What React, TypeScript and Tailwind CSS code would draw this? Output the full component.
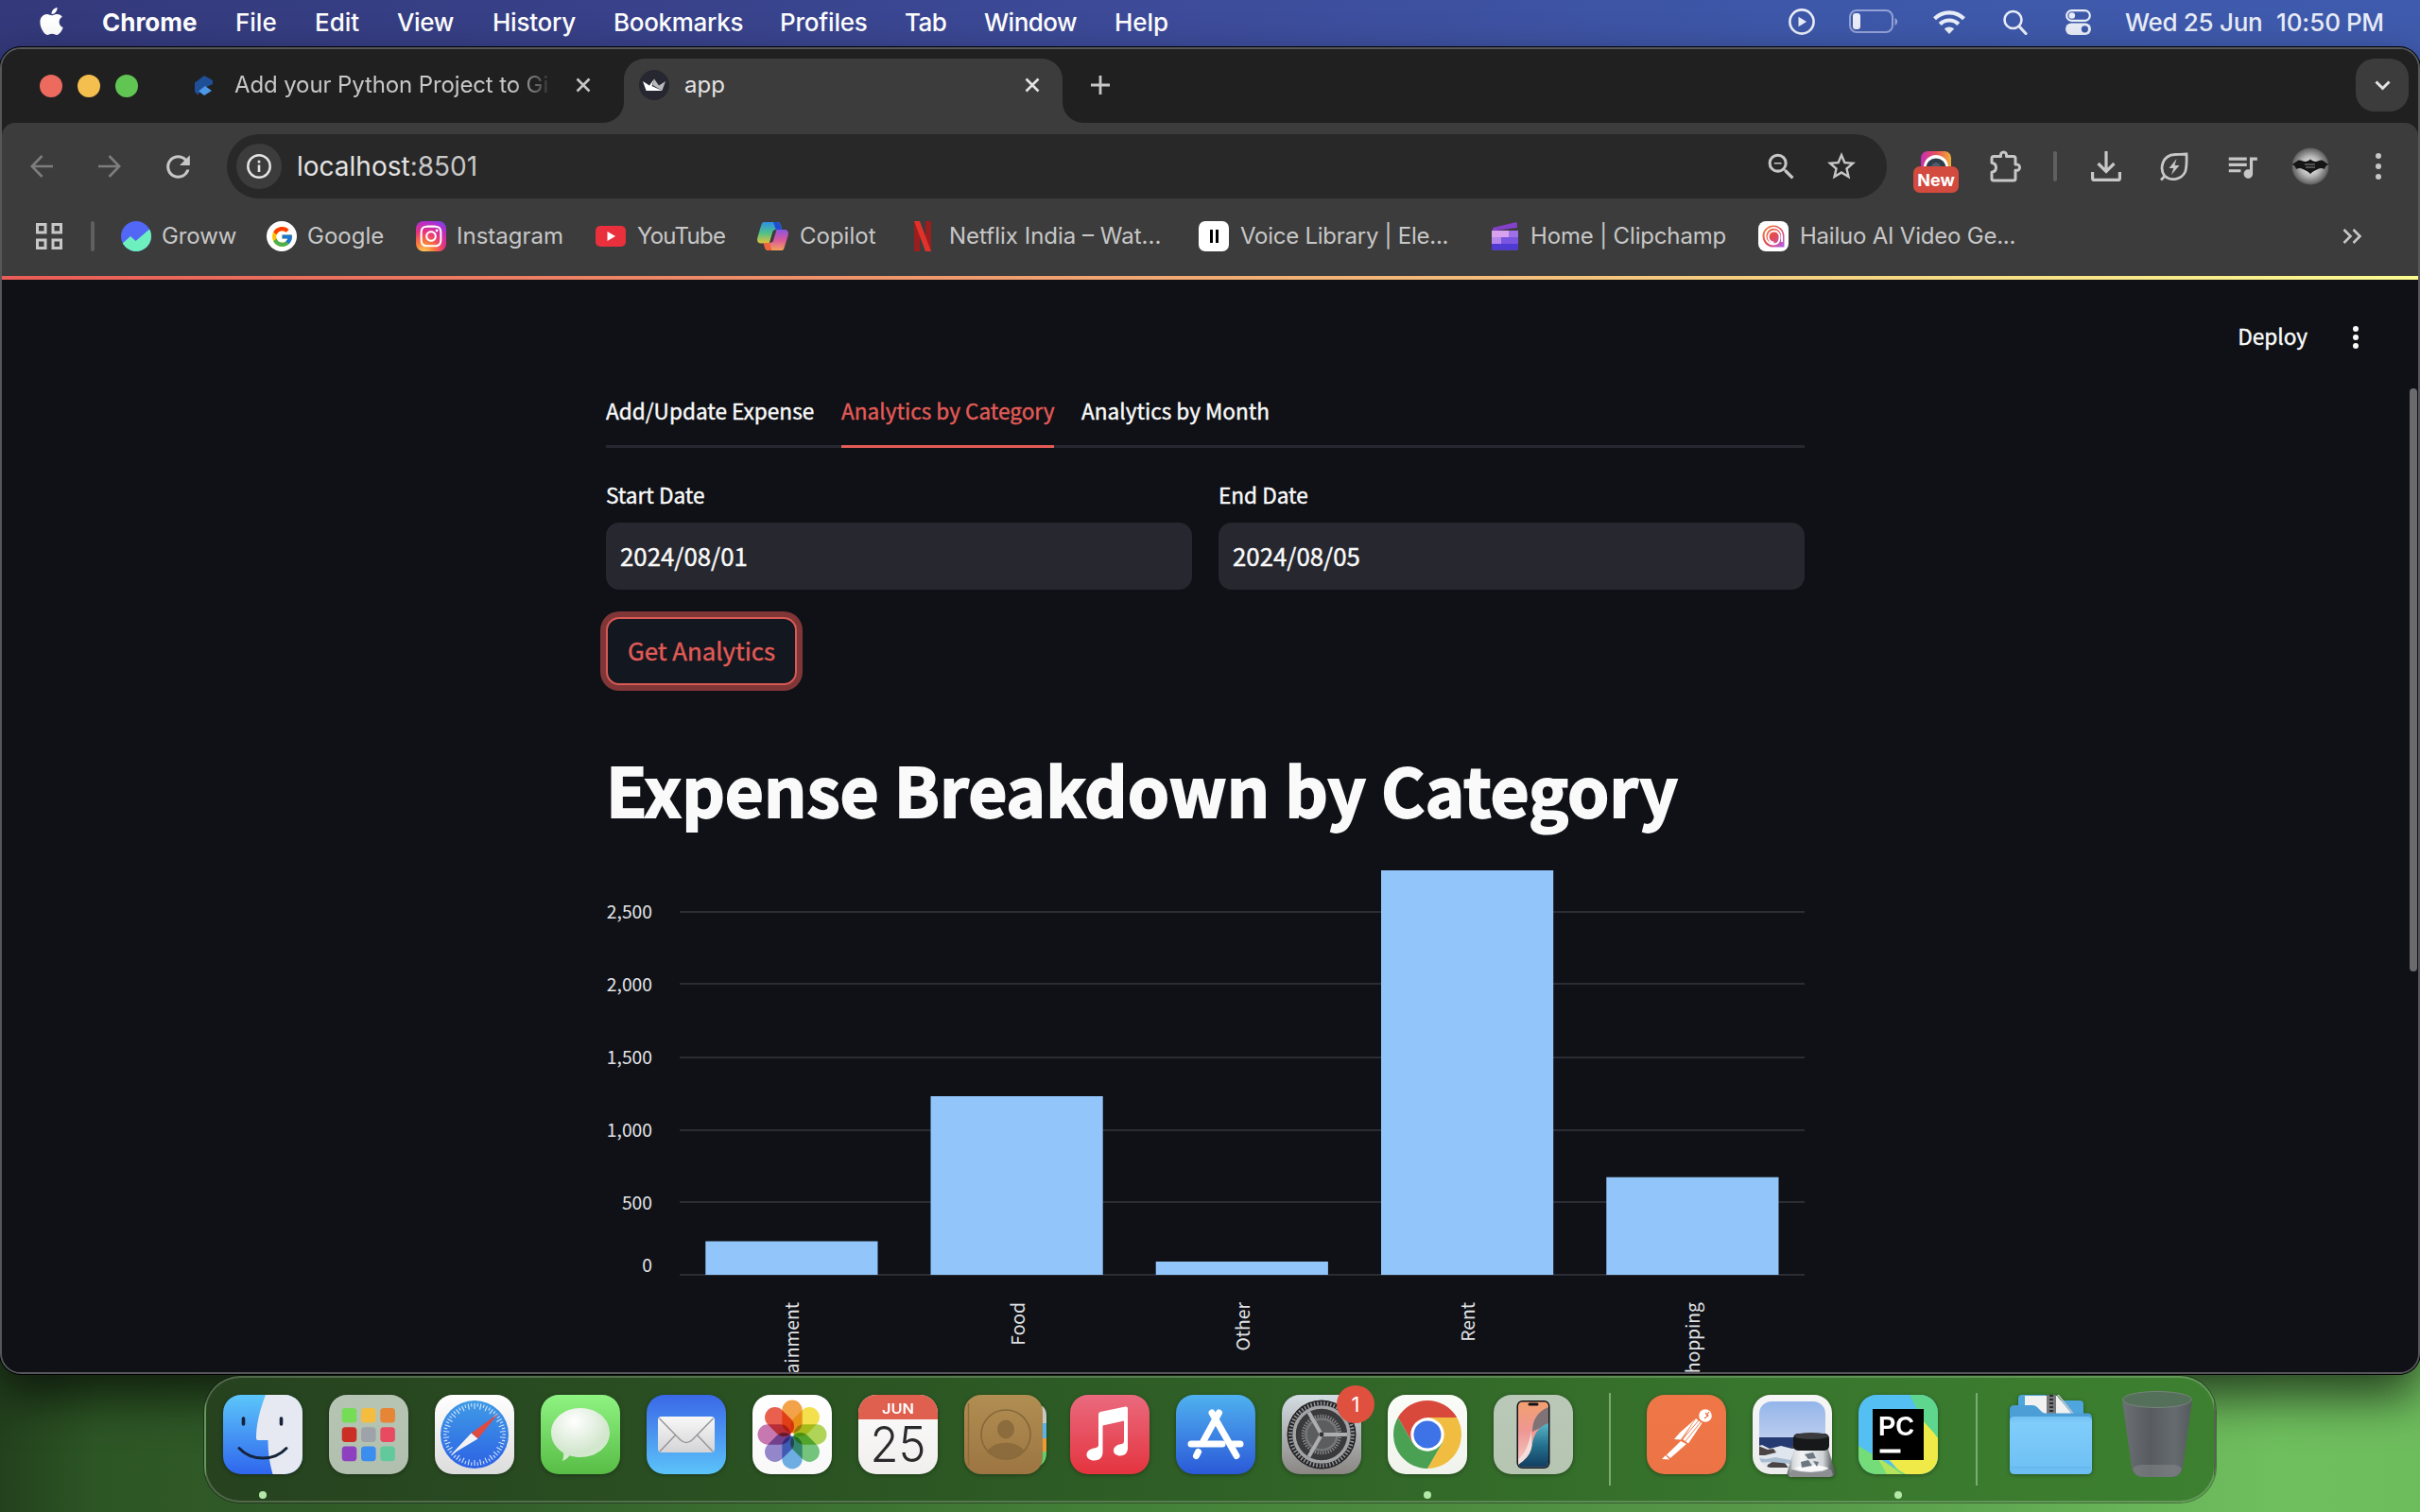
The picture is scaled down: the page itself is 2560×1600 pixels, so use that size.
import React, { type ReactNode } from "react";
import { FaApple, FaInstagram } from "react-icons/fa";
import { FcGoogle } from "react-icons/fc";
import { MdStarBorder, MdZoomOut, MdQueueMusic, MdRefresh } from "react-icons/md";

const sys = "font-['Inter',sans-serif]";
const src = "font-['Noto_Sans_CJK_SC',sans-serif]";

const menus = [
  { label: "File", cls: "w-[84px]" },
  { label: "Edit", cls: "w-[87px]" },
  { label: "View", cls: "w-[101px] tracking-[-0.4px]" },
  { label: "History", cls: "w-[128px] tracking-[-0.25px]" },
  { label: "Bookmarks", cls: "w-[176px] tracking-[-0.3px]" },
  { label: "Profiles", cls: "w-[132px] tracking-[-0.2px]" },
  { label: "Tab", cls: "w-[84px] tracking-[-0.6px]" },
  { label: "Window", cls: "w-[138px] tracking-[-0.5px]" },
  { label: "Help", cls: "w-[60px] tracking-[-0.1px]" },
];

function MenuBar() {
  return (
    <div className={`flex h-[46px] w-full shrink-0 items-center pl-[42px] pr-[38px] text-[26px] text-white ${sys}`}>
      <FaApple className="-mt-[2px] h-[33px] w-[25px]" />
      <div className="ml-[41px] w-[141px] font-bold">Chrome</div>
      {menus.map((m) => (
        <div key={m.label} className={`${m.cls} font-medium`}>{m.label}</div>
      ))}
      <div className="ml-auto flex items-center text-[#e9edf8]">
        <svg className="h-[28px] w-[28px]" viewBox="0 0 28 28"><circle cx="14" cy="14" r="12.6" fill="none" stroke="currentColor" strokeWidth="2.6" /><path d="M10.5 8.8v10.4l8.6-5.2z" fill="currentColor" /></svg>
        <svg className="ml-[36px] h-[26px] w-[52px]" viewBox="0 0 52 26"><rect x="1" y="1" width="45" height="23" rx="7" fill="none" stroke="#93a2d6" strokeWidth="2" /><rect x="4" y="4" width="8" height="17" rx="3" fill="currentColor" /><path d="M48.5 9v8c1.8-.8 2.7-2.200 2.700-4s-.9-3.200-2.700-4z" fill="#93a2d6" /></svg>
        <svg className="ml-[37px] h-[26px] w-[34px]" viewBox="0 0 34 26"><g fill="none" stroke="currentColor" strokeWidth="4.200"><path d="M1.500 9.800a22 22 0 0 1 31 0" /><path d="M7.200 15.500a14 14 0 0 1 19.600 0" /></g><path d="M17 26l-5.200-5.400a7.400 7.400 0 0 1 10.400 0z" fill="currentColor" /></svg>
        <svg className="ml-[40px] h-[27px] w-[26px]" viewBox="0 0 26 27"><circle cx="10.500" cy="11" r="9" fill="none" stroke="currentColor" strokeWidth="2.600" /><path d="M17 18l7 7.500" stroke="currentColor" strokeWidth="3.200" strokeLinecap="round" /></svg>
        <svg className="ml-[40px] h-[27px] w-[27px]" viewBox="0 0 27 27"><rect x="1.200" y="1.200" width="24.600" height="10.600" rx="5.300" fill="none" stroke="currentColor" strokeWidth="2.200" /><circle cx="6.800" cy="6.500" r="3.300" fill="currentColor" /><rect x="0" y="14.500" width="27" height="12.500" rx="6.200" fill="currentColor" /><circle cx="20.400" cy="20.800" r="3.600" fill="#3f58a9" /></svg>
        <span className="ml-[36px] w-[160px] font-medium tracking-[-0.3px]">Wed 25 Jun</span>
        <span className="w-[74px] font-medium tracking-[-0.1px]">10:50</span>
        <span className="w-[40px] font-medium tracking-[-0.4px]">PM</span>
      </div>
    </div>
  );
}

function X({ cls }: { cls: string }) {
  return <svg className={`h-[16px] w-[16px] ${cls}`} viewBox="0 0 16 16"><path d="M1.500 1.500l13 13M14.500 1.500l-13 13" stroke="currentColor" strokeWidth="2.600" /></svg>;
}

function TabStrip() {
  return (
    <div className={`flex h-[78px] shrink-0 bg-[#202020] pl-[40px] pt-[10px] text-[24px] ${sys}`}>
      <div className="flex h-[56px] items-center gap-[16px] pt-[2px]">
        <i className="h-[24px] w-[24px] rounded-full bg-[#ed6a5f]" />
        <i className="h-[24px] w-[24px] rounded-full bg-[#f5bf4f]" />
        <i className="h-[24px] w-[24px] rounded-full bg-[#61c554]" />
      </div>
      <div className="ml-[60px] flex h-[56px] w-[454px] items-center text-[#c7c7c7]">
        <svg className="h-[21px] w-[20px]" viewBox="0 0 20 21"><path d="M10 0l9 5v4L9 13.500 3 20.500 0 17V7.500z" fill="#1f4f96" /><path d="M11 11l7 5-8 5-6-4.500z" fill="#4d97e8" /></svg>
        <div className="ml-[22px] w-[335px] whitespace-nowrap tracking-[-0.12px] [mask-image:linear-gradient(90deg,#000_88%,transparent_101%)]">Add your Python Project to Gi</div>
        <X cls="ml-[26px] shrink-0" />
      </div>
      <div className="relative flex h-[68px] w-[464px] rounded-t-[22px] bg-[#3c3c3c] text-[#e3e3e3]">
        <svg className="absolute -left-[22px] bottom-0 h-[22px] w-[22px]" viewBox="0 0 22 22"><path d="M22 0v22H0A22 22 0 0 0 22 0z" fill="#3c3c3c" /></svg>
        <svg className="absolute -right-[22px] bottom-0 h-[22px] w-[22px]" viewBox="0 0 22 22"><path d="M0 0v22h22A22 22 0 0 1 0 0z" fill="#3c3c3c" /></svg>
        <div className="flex h-[56px] w-full items-center pl-[16px] pr-[24px]">
          <svg className="h-[32px] w-[32px]" viewBox="0 0 32 32"><circle cx="16" cy="16" r="16" fill="#262730" /><path d="M16 9.500l5 7 7-4.500-3.600 10-10-6z" fill="#b9b9bd" /><path d="M4 12l7 4.500L16 9.500l-2.500 7.500L24.400 22H7.600z" fill="#fff" /></svg>
          <span className="ml-[16px]">app</span>
          <X cls="ml-auto" />
        </div>
      </div>
      <div className="ml-[30px] flex h-[56px] items-center text-[#c7c7c7]">
        <svg className="h-[20px] w-[20px]" viewBox="0 0 20 20"><path d="M10 0v20M0 10h20" stroke="currentColor" strokeWidth="2.800" /></svg>
      </div>
      <div className="ml-auto mr-[10px] flex h-[56px] w-[56px] items-center justify-center rounded-[20px] bg-[#3c3c3c]">
        <svg className="h-[11px] w-[17px]" viewBox="0 0 17 11"><path d="M1.500 1.500l7 7 7-7" fill="none" stroke="#e3e3e3" strokeWidth="3" /></svg>
      </div>
    </div>
  );
}

function Cell({ children }: { children: ReactNode }) {
  return <div className="flex h-full w-[72px] items-center justify-center">{children}</div>;
}

function Toolbar() {
  return (
    <div className={`flex h-[92px] items-center pl-[6px] text-[#c7c7c7] ${sys}`}>
      <Cell><svg className="h-[24px] w-[24px] text-[#7d7d7d]" viewBox="0 0 24 24"><path d="M12.500 1L1.800 12l10.700 11M1.800 12H24" fill="none" stroke="currentColor" strokeWidth="2.600" /></svg></Cell>
      <Cell><svg className="h-[24px] w-[24px] text-[#7d7d7d]" viewBox="0 0 24 24"><path d="M11.500 1l10.700 11-10.700 11M22.200 12H0" fill="none" stroke="currentColor" strokeWidth="2.600" /></svg></Cell>
      <Cell><MdRefresh className="h-[37px] w-[37px]" /></Cell>
      <div className="ml-[16px] flex h-[68px] w-[1756px] items-center rounded-full bg-[#282828] pl-[10px] pr-[30px]">
        <div className="flex h-[48px] w-[48px] items-center justify-center rounded-full bg-[#3c3c3c]">
          <svg className="h-[26px] w-[26px]" viewBox="0 0 26 26"><circle cx="13" cy="13" r="11.700" fill="none" stroke="#e3e3e3" strokeWidth="2.500" /><path d="M13 11.500v7.500M13 6.800v2.600" stroke="#e3e3e3" strokeWidth="2.600" /></svg>
        </div>
        <span className="ml-[16px] text-[28px] text-[#e3e3e3]">localhost<span className="text-[#c7c7c7]">:8501</span></span>
        <MdZoomOut className="ml-auto h-[37px] w-[37px]" />
        <MdStarBorder className="ml-[27px] h-[36px] w-[36px]" />
      </div>
      <div className="ml-[16px] flex h-full w-[72px] flex-col items-center pt-[30px]">
        <svg className="h-[16px] w-[32px]" viewBox="0 0 32 16"><defs><linearGradient id="ex"><stop offset="0" stopColor="#c52fb5" /><stop offset=".5" stopColor="#e8505a" /><stop offset="1" stopColor="#f0b03a" /></linearGradient></defs><path d="M0 16V7a7 7 0 0 1 7-7h18a7 7 0 0 1 7 7v9z" fill="url(#ex)" /><circle cx="16" cy="17" r="13" fill="#fff" /><circle cx="16" cy="18" r="10.500" fill="#2e3b48" /><circle cx="16" cy="17" r="5" fill="#4c5c6b" /></svg>
        <div className="flex h-[28px] w-[48px] items-center justify-center rounded-[7px] bg-[#d34a3f] text-[18px] font-bold text-white">New</div>
      </div>
      <Cell><svg className="ml-[2px] h-[34px] w-[34px]" viewBox="0 0 34 34"><path d="M3 8.500c0-1.200.8-2 2-2h7.500C12 3.500 13.500 2 15.500 2s3.500 1.500 3 4.500H26c1.200 0 2 .8 2 2V15c3-.5 4.500 1 4.500 3.200S31 21.700 28 21.200V30c0 1.200-.8 2-2 2H5c-1.200 0-2-.8-2-2v-6.800c6-1 6-9 0-10z" fill="none" stroke="currentColor" strokeWidth="3" strokeLinejoin="round" /></svg></Cell>
      <div className="flex w-[36px] justify-center"><i className="h-[32px] w-[4px] rounded-full bg-[#5f5f5f]" /></div>
      <Cell><svg className="h-[32px] w-[32px]" viewBox="0 0 32 32"><path d="M16 0v21M7.500 13l8.500 8.500 8.500-8.500M1.600 22v6.400c0 1.200.8 2 2 2h24.800c1.200 0 2-.8 2-2V22" fill="none" stroke="currentColor" strokeWidth="3.200" /></svg></Cell>
      <Cell><svg className="h-[31px] w-[30px]" viewBox="0 0 30 31"><path d="M1 29.500l4-4.200C-.5 18.500 1.500 3 16 2.500c5-.2 8.500 0 12-.5.3 9 .5 14-1.500 19C23 28.500 12 31.500 5 25.300" fill="none" stroke="currentColor" strokeWidth="2.800" /><path d="M17.500 7l-8 10h4.800L12 24l8.500-10h-5z" fill="currentColor" /></svg></Cell>
      <Cell><MdQueueMusic className="h-[38px] w-[38px]" /></Cell>
      <Cell>
        <svg className="h-[40px] w-[40px]" viewBox="0 0 40 40"><defs><radialGradient id="av"><stop offset="0" stopColor="#fff" /><stop offset=".55" stopColor="#b5b5b5" /><stop offset="1" stopColor="#5c5c5c" /></radialGradient></defs><circle cx="20" cy="20" r="19.500" fill="url(#av)" /><path d="M0 18c4-1 5-4 8-4.500 3 0 4 1.500 7 1.500l3-1 2-1.500 2 1.500 3 1c3 0 4-1.500 7-1.500 3 .5 4 3.500 8 4.500-3 .5-4 2-5 5-2-1.500-5-1.500-7 0-2 1.200-5 2-8 5-3-3-6-3.800-8-5-2-1.500-5-1.500-7 0-1-3-2-4.500-5-5z" fill="#151515" /><path d="M14 18h11M15 21h10" stroke="#8a8a8a" strokeWidth="1.200" /></svg>
      </Cell>
      <Cell><svg className="h-[28px] w-[6px]" viewBox="0 0 6 28" fill="currentColor"><circle cx="3" cy="3" r="3" /><circle cx="3" cy="14" r="3" /><circle cx="3" cy="25" r="3" /></svg></Cell>
    </div>
  );
}

const bookmarks: { label: string; cls: string; icon: ReactNode }[] = [
  { label: "Groww", cls: "w-[154px] gap-[11px] tracking-[-0.1px]", icon: <svg className="h-[32px] w-[32px]" viewBox="0 0 32 32"><clipPath id="gw"><circle cx="16" cy="16" r="16" /></clipPath><g clipPath="url(#gw)"><path fill="#5267f5" d="M0 0h32v32H0z" /><path d="M0 25l10-9 5.500 5L32 7v25H0z" fill="#6ef0be" /></g></svg> },
  { label: "Google", cls: "w-[158px] gap-[11px]", icon: <span className="flex h-[32px] w-[32px] items-center justify-center rounded-full bg-white"><FcGoogle className="h-[25px] w-[25px]" /></span> },
  { label: "Instagram", cls: "w-[190px] gap-[11px]", icon: <span className="flex h-[32px] w-[32px] items-center justify-center rounded-[8px] bg-[radial-gradient(circle_at_25%_105%,#fdd45a_0%,#f9793a_28%,#e8317f_55%,#b02fd0_80%,#5b51ef_100%)] text-white"><FaInstagram className="h-[26px] w-[26px]" /></span> },
  { label: "YouTube", cls: "w-[171px] gap-[12px] tracking-[-0.75px]", icon: <svg className="h-[22px] w-[32px]" viewBox="0 0 32 22"><rect width="32" height="22" rx="5" fill="#e9303c" /><path d="M12.500 6v10l8.500-5z" fill="#fff" /></svg> },
  { label: "Copilot", cls: "w-[164px] gap-[12px]", icon: <svg className="h-[30px] w-[33px]" viewBox="0 0 33 30"><defs><linearGradient id="c1" x1="0" y1="0" x2="0" y2="1"><stop offset="0" stopColor="#2f8fe8" /><stop offset=".5" stopColor="#4cc08a" /><stop offset="1" stopColor="#e3c23a" /></linearGradient><linearGradient id="c2" x1="0" y1="0" x2="0" y2="1"><stop offset="0" stopColor="#8a55e0" /><stop offset=".5" stopColor="#d9589c" /><stop offset="1" stopColor="#f5a25a" /></linearGradient></defs><path d="M7 0h14c2.500 0 3.500 1.500 4.200 4l1 4h-6.500c-2 0-3 1-3.600 3l-2.600 9.500c-.8 2.500-1.500 2-4 2H4C0 22.500-.6 19 .6 15.500L4 4C5 1 5.500 0 7 0z" fill="url(#c1)" /><path d="M20 0c2.800 0 4.200 1 5 4l1.200 4h-6.500L17 0z" fill="#1f4fd0" /><path d="M26 30H12c-2.500 0-3.500-1.500-4.200-4l-1-4h6.500c2 0 3-1 3.600-3l2.600-9c.8-2.500 1.500-2 4-2H29c4 0 4.600 3.500 3.400 7L29 26c-1 3-1.500 4-3 4z" fill="url(#c2)" /><path d="M12 30c-2.500 0-3.500-1.500-4.200-4l-1-4h6.500l2.200 8z" fill="#f0653a" /><path d="M17 10l3-.2L16.400 21l-3-.2z" fill="#3c3c3c" /></svg> },
  { label: "Netflix India – Wat...", cls: "w-[303px] gap-[19px]", icon: <svg className="ml-[2px] h-[32px] w-[18px]" viewBox="0 0 18 32"><path d="M0 0h6v32H0zM12 0h6v32h-6z" fill="#9c1d1d" /><path d="M0 0h6l12 32h-6z" fill="#e0322b" /></svg> },
  { label: "Voice Library | Ele...", cls: "w-[308px] gap-[12px] tracking-[-0.26px]", icon: <span className="flex h-[32px] w-[32px] items-center justify-center gap-[3px] rounded-[7px] bg-white"><i className="h-[14px] w-[3px] bg-black" /><i className="h-[14px] w-[3px] bg-black" /></span> },
  { label: "Home | Clipchamp", cls: "w-[284px] gap-[12px] tracking-[-0.16px]", icon: <svg className="ml-[2px] h-[30px] w-[29px]" viewBox="0 0 29 30"><path d="M1 6L25 .300q1.500-.3 1.800 1L27 6 1 9.500z" fill="#8340c9" /><path d="M0 9h28v19a1.500 1.500 0 0 1-1.500 1.500h-25A1.500 1.500 0 0 1 0 28z" fill="#7a55e0" /><path d="M0 9h18v7H0z" fill="#d9a2ee" /><path d="M18 9h10v7H18z" fill="#9f70e8" /><path d="M0 16h10v7H0z" fill="#b887ec" /><path d="M0 23h28v5.500a1 1 0 0 1-1 1H1a1 1 0 0 1-1-1z" fill="#4f3bd4" /></svg> },
  { label: "Hailuo AI Video Ge...", cls: "w-[560px] gap-[12px] tracking-[-0.22px]", icon: <svg className="h-[32px] w-[32px]" viewBox="0 0 32 32"><defs><linearGradient id="hl" x1="0" y1="0" x2="1" y2="1"><stop offset="0" stopColor="#f0883a" /><stop offset=".5" stopColor="#e4484e" /><stop offset="1" stopColor="#b060f0" /></linearGradient></defs><rect width="32" height="32" rx="8" fill="#fff" /><path d="M16 4.500A11.500 11.500 0 1 0 16 27.500h11.500V16A11.500 11.500 0 0 0 16 4.500z" fill="url(#hl)" /><path d="M25 22V16a8.800 8.800 0 1 0-9 8.500c5 0 6.500-3.500 6.500-7a6 6 0 1 0-6 5" fill="none" stroke="#fff" strokeWidth="1.900" /></svg> },
];

function Bookmarks() {
  return (
    <div className={`flex h-[56px] items-center pl-[36px] text-[24px] text-[#c7c7c7] ${sys}`}>
      <svg className="h-[28px] w-[28px]" viewBox="0 0 28 28"><path d="M1.500 1.500h8.500v8.500H1.500zM18 1.500h8.500v8.500H18zM1.500 18h8.500v8.500H1.500zM18 18h8.500v8.500H18z" fill="none" stroke="currentColor" strokeWidth="3" /></svg>
      <i className="ml-[30px] mr-[28px] h-[32px] w-[4px] rounded-full bg-[#5f5f5f]" />
      {bookmarks.map((b) => (
        <div key={b.label} className={`flex shrink-0 items-center whitespace-nowrap ${b.cls}`}>{b.icon}<span>{b.label}</span></div>
      ))}
      <svg className="ml-[58px] h-[16px] w-[21px] shrink-0" viewBox="0 0 21 16"><path d="M1.500 1l7 7-7 7M11.500 1l7 7-7 7" fill="none" stroke="currentColor" strokeWidth="2.600" /></svg>
    </div>
  );
}

const ticks = [
  { y: 965, t: "2,500", ty: 965 }, { y: 1041, t: "2,000", ty: 1042 }, { y: 1119, t: "1,500", ty: 1119 },
  { y: 1196, t: "1,000", ty: 1196 }, { y: 1272, t: "500", ty: 1272.500 }, { y: 1349, t: "0", ty: 1339 },
];
const bars = [
  { x: 746.300, top: 1313.500, t: "Entertainment" }, { x: 984.500, top: 1160, t: "Food" }, { x: 1222.700, top: 1335, t: "Other" },
  { x: 1461, top: 921, t: "Rent" }, { x: 1699.300, top: 1245.700, t: "Shopping" },
];

function Chart() {
  return (
    <svg className="block h-[573px] w-[1268px] overflow-visible" viewBox="641 879 1268 573">
      {ticks.map((k) => (<rect key={k.t} x="719" y={k.y - 1} width="1190" height="2" fill="#2b2c34" />))}
      {bars.map((b) => (<rect key={b.t} x={b.x} y={b.top} width="182.200" height={1349 - b.top} fill="#92c5f9" />))}
      <g className={`${src} text-[19.3px] [-webkit-text-stroke:0.4px_#e2e3e6]`} fill="#e2e3e6">
        {ticks.map((k) => (<text key={k.t} x="690" y={k.ty + 7} textAnchor="end">{k.t}</text>))}
        {bars.map((b) => (<text key={b.t} transform={`translate(${b.x + 99} 1378) rotate(-90)`} textAnchor="end">{b.t}</text>))}
      </g>
    </svg>
  );
}

function Page() {
  return (
    <div className={`relative flex-1 overflow-hidden bg-[#0f1116] text-[#fafafa] [-webkit-text-stroke:0.4px_currentColor] ${src}`}>
      <div className="flex h-[118px] items-center justify-end pr-[63px] text-[22.6px] leading-[30px]">
        <span className="mt-[2px]">Deploy</span>
        <svg className="ml-[48px] mt-[4px] h-[24px] w-[6px]" viewBox="0 0 6 24" fill="currentColor"><circle cx="3" cy="3" r="3" /><circle cx="3" cy="12" r="3" /><circle cx="3" cy="21" r="3" /></svg>
      </div>
      <div className="ml-[639px] w-[1268px]">
        <div className="flex h-[60px] gap-[29px] whitespace-nowrap border-b-[3px] border-[#26272f] text-[22.6px] leading-[41px]">
          <div className="w-[220px]">Add/Update Expense</div>
          <div className="h-[60px] w-[225px] border-b-[3px] border-[#e25b56] text-[#e25b56]">Analytics by Category</div>
          <div className="w-[200px]">Analytics by Month</div>
        </div>
        <div className="mt-[36px] grid grid-cols-2 gap-[28px]">
          <div>
            <div className="mb-[15px] text-[22.6px] leading-[28px]">Start Date</div>
            <div className="h-[71px] rounded-[14px] bg-[#26272f] pl-[15px] text-[25.8px] leading-[70px]">2024/08/01</div>
          </div>
          <div>
            <div className="mb-[15px] text-[22.6px] leading-[28px]">End Date</div>
            <div className="h-[71px] rounded-[14px] bg-[#26272f] pl-[15px] text-[25.8px] leading-[70px]">2024/08/05</div>
          </div>
        </div>
        <button className="mt-[29px] block h-[72px] w-[202px] rounded-[14px] border-2 border-[#d95a55] bg-[#131720] text-[25.8px] leading-[62px] text-[#e25b56] shadow-[0_0_0_6px_#803637]"><span className="relative -top-px">Get Analytics</span></button>
        <h1 className="mt-[64px] h-[90px] whitespace-nowrap text-[70.9px] font-bold leading-[90px] [-webkit-text-stroke:1.8px_currentColor]">Expense Breakdown by Category</h1>
        <Chart />
      </div>
      <div className="absolute right-[1px] top-[115px] h-[617px] w-[8px] rounded-full bg-[#6b6b6e]" />
    </div>
  );
}

function Tile({ children, id, a, b }: { children?: ReactNode; id: string; a: string; b: string }) {
  return (
    <svg className="h-[84px] w-[84px] overflow-visible drop-shadow-[0_1px_2px_rgba(0,0,0,.35)]" viewBox="0 0 84 84">
      <defs>
        <linearGradient id={id} x1="0" y1="0" x2="0" y2="1"><stop offset="0" stopColor={a} /><stop offset="1" stopColor={b} /></linearGradient>
        <clipPath id={id + "c"}><rect width="84" height="84" rx="19" /></clipPath>
      </defs>
      <rect width="84" height="84" rx="19" fill={`url(#${id})`} />
      {children}
    </svg>
  );
}

const range = (n: number) => Array.from({ length: n }, (_, i) => i);

const Finder = () => (
  <Tile id="fi" a="#5cc6fa" b="#2f66ee">
    <g clipPath="url(#fic)"><path d="M45 0C38 18 35 33 35 46q0 2 2 2h10.500c0 14 2 25 5 36H84V0z" fill="#e6e9f1" /></g>
    <path d="M21.500 25v6M61.500 25v6" stroke="#14233a" strokeWidth="3.600" strokeLinecap="round" />
    <path d="M17 56.500c13 14 37 14 50 0" fill="none" stroke="#14233a" strokeWidth="3" strokeLinecap="round" />
  </Tile>
);
const padC = ["#74dc55", "#f4bd40", "#e58535", "#cb2e24", "#9da3a8", "#e84a62", "#8d41c0", "#3c8df0", "#62c99c"];
const Launchpad = () => (
  <Tile id="lp" a="#b6c4b4" b="#b1c0ae">
    {padC.map((c, i) => (<rect key={c} x={13.700 + (i % 3) * 20.300} y={14 + Math.floor(i / 3) * 20.300} width="15.600" height="15.600" rx="3.600" fill={c} />))}
  </Tile>
);
const Safari = () => (
  <Tile id="sa" a="#ffffff" b="#dcdcdc">
    <defs><linearGradient id="sab" x1="0" y1="0" x2="0" y2="1"><stop offset="0" stopColor="#3f9be6" /><stop offset="1" stopColor="#2d62e4" /></linearGradient></defs>
    <circle cx="42" cy="42" r="36" fill="url(#sab)" />
    {range(60).map((i) => (<path key={i} d={i % 2 ? "M42 9v3.500" : "M42 9v6"} stroke="#d4e6fb" strokeWidth="1.100" transform={`rotate(${i * 6} 42 42)`} />))}
    <path d="M67 20L45.500 46.500 38.500 40.500z" fill="#e04a3f" /><path d="M17 63.500l21.500-23 7 6z" fill="#f3f3f3" />
  </Tile>
);
const Messages = () => (
  <Tile id="ms" a="#8ff382" b="#57bd45">
    <defs><radialGradient id="msb" cx=".4" cy=".25" r=".85"><stop offset="0" stopColor="#fff" /><stop offset=".7" stopColor="#d2e6cd" /><stop offset="1" stopColor="#d4f0ce" /></radialGradient></defs>
    <path d="M42 14c17.500 0 31 11.500 31 26S59.500 66 42 66c-4 0-8-.6-11.500-1.800-2 2.800-4.500 4.800-8 5.800 1.500-2.500 2-5 1.500-8.500C16 56.500 11 49 11 40c0-14.500 13.500-26 31-26z" fill="url(#msb)" />
  </Tile>
);
const Mail = () => (
  <Tile id="ml" a="#3a68e8" b="#5cc3f9">
    <defs><linearGradient id="mlb" x1="0" y1="0" x2="0" y2="1"><stop offset="0" stopColor="#f8f8f8" /><stop offset="1" stopColor="#d4d4d6" /></linearGradient></defs>
    <rect x="12" y="23" width="60" height="38" rx="4" fill="url(#mlb)" />
    <path d="M14 60l17-18M70 60L53 42M13.500 25l22 22.500c4 4 9 4 13 0l22-22.500" fill="none" stroke="#97979b" strokeWidth="1.500" />
  </Tile>
);
const petals = ["#f29a3a", "#f2de3c", "#a8d148", "#69bf72", "#62a6e0", "#8a7cc6", "#c26cab", "#e9523f"];
const Photos = () => (
  <Tile id="ph" a="#ffffff" b="#f8f8f8">
    <g className="isolate">{petals.map((c, i) => (<rect key={c} x="31.300" y="5.500" width="21.400" height="35" rx="10.700" fill={c} opacity=".92" transform={`rotate(${i * 45} 42 42)`} className="mix-blend-multiply" />))}</g>
    <circle cx="42" cy="42" r="1.600" fill="#fff" />
  </Tile>
);
const Calendar = () => (
  <Tile id="ca" a="#fcfcfc" b="#f1efee">
    <path d="M0 26V19A19 19 0 0 1 19 0h46a19 19 0 0 1 19 19v7z" fill="#e0604f" />
    <text x="42" y="20" textAnchor="middle" fill="#fff" className="font-['Inter'] text-[15px] font-semibold" textLength="34" lengthAdjust="spacingAndGlyphs">JUN</text>
    <text x="42" y="71" textAnchor="middle" fill="#2a2a2c" className="font-['Inter'] text-[52px] font-light" textLength="59" lengthAdjust="spacingAndGlyphs">25</text>
  </Tile>
);
const Contacts = () => (
  <svg className="h-[84px] w-[88px] translate-x-[2px] overflow-visible drop-shadow-[0_1px_2px_rgba(0,0,0,.35)]" viewBox="0 0 88 84">
    <defs><linearGradient id="co" x1="0" y1="0" x2="0" y2="1"><stop offset="0" stopColor="#b18e52" /><stop offset="1" stopColor="#9c7542" /></linearGradient></defs>
    <path d="M76 10q11 1 11 12v8H76z" fill="#c9c9c4" /><path d="M76 30h11v16H76z" fill="#58b4e6" /><path d="M76 46h11v14H76z" fill="#ee9a33" /><path d="M76 60h11v3q-1 10-8 12z" fill="#62d06a" />
    <rect width="83" height="84" rx="18" fill="url(#co)" /><path d="M4.500 9v66" stroke="#8d6c3a" strokeWidth="1.500" />
    <circle cx="44" cy="42" r="26" fill="none" stroke="#86683a" strokeWidth="1.600" /><ellipse cx="44" cy="36.500" rx="9" ry="10" fill="#8c6c3c" /><path d="M25 59c7-11 31-11 38 0a26 26 0 0 1-38 0z" fill="#8c6c3c" />
  </svg>
);
const Music = () => (
  <Tile id="mu" a="#ea6a7e" b="#e4343f">
    <path d="M30 20.500q0-2 2-2.500l26.500-5.500q2.500-.5 2.500 2v42c0 5-3.500 8-8 8-4 0-7-2.300-7-5.500 0-3.800 3.200-6 7.500-6.800 2.500-.5 3.500-1 3.500-3.500V27.500l-22.500 5V61c0 5-3.500 8.500-9 8.500-4.500 0-8-2.500-8-6s3-6 7.500-7c4-.8 5-1.200 5-4z" fill="#fff" />
  </Tile>
);
const AppStore = () => (
  <Tile id="as" a="#4fb1ef" b="#2b59d8">
    <g stroke="#fff" strokeWidth="7" strokeLinecap="round"><path d="M45.500 19L29 49" /><path d="M38 19l26 45.500" /><path d="M16 52h33M60 52h8" /><path d="M23.500 60.500l-2 4" /></g>
  </Tile>
);
const Settings = () => (
  <Tile id="se" a="#d3dde2" b="#8a8683">
    <circle cx="42" cy="42" r="36.500" fill="#242426" />
    <circle cx="42" cy="42" r="33" fill="none" stroke="#98999b" strokeWidth="4" strokeDasharray="1.500 2" />
    <circle cx="42" cy="42" r="29" fill="#3a3a3c" stroke="#a3a4a6" strokeWidth="3.600" />
    <circle cx="42" cy="42" r="19.500" fill="none" stroke="#8a8b8d" strokeWidth="3.500" strokeDasharray="1.300 1.500" />
    <circle cx="42" cy="42" r="16.500" fill="#5c5d5f" stroke="#77787a" strokeWidth="2.500" />
    {[0, 120, 240].map((r) => (<path key={r} d="M42 42h27" stroke="#adaeb0" strokeWidth="4" transform={`rotate(${r} 42 42)`} />))}
    <circle cx="42" cy="42" r="2.400" fill="#303032" />
  </Tile>
);
const Chrome = () => (
  <Tile id="cr" a="#fafcf8" b="#f0f3ec">
    <g transform="translate(42 42)">
      <path d="M-31.200-18A36 36 0 0 1 31.200-18H0L-15.600 9z" fill="#d8483b" />
      <path d="M31.200-18A36 36 0 0 1 0 36L15.600 9 0-18z" fill="#f1bd41" />
      <path d="M0 36A36 36 0 0 1-31.200-18L-15.600 9h31.200z" fill="#4ba153" />
      <circle r="17.700" fill="#fff" /><circle r="14.500" fill="#3d73e6" />
    </g>
  </Tile>
);
const Phone = () => (
  <Tile id="ip" a="#bac8b8" b="#b6c5b1">
    <defs>
      <linearGradient id="ipa" x1="0" y1="0" x2="0" y2="1"><stop offset="0" stopColor="#f3a06e" /><stop offset=".45" stopColor="#ee9794" /><stop offset="1" stopColor="#f6cfc8" /></linearGradient>
      <linearGradient id="ipb" x1="0" y1="0" x2="0" y2="1"><stop offset="0" stopColor="#59b7c6" /><stop offset=".5" stopColor="#246f8e" /><stop offset="1" stopColor="#123a5c" /></linearGradient>
      <clipPath id="ipc2"><rect x="26" y="7.500" width="32" height="69" rx="4.500" /></clipPath>
    </defs>
    <rect x="24.500" y="6" width="35" height="72" rx="6" fill="#10131a" />
    <g clipPath="url(#ipc2)"><path fill="url(#ipa)" d="M26 7h32v70H26z" /><path d="M58 13c-12 5-17 14-17 26l17-8z" fill="#7f7378" /><path d="M58 30C46 34 42 44 40.500 54c-1.500 10-8 15-14.500 20v4h32z" fill="url(#ipb)" /><path d="M40.500 54c-1.500 10-8 15-14.500 20v-6c8-6 12-18 14-30q0 8 .5 16z" fill="#f3dedb" /></g>
    <rect x="36.500" y="8.500" width="11" height="3" rx="1.500" fill="#10131a" />
  </Tile>
);
const Postman = () => (
  <Tile id="po" a="#ef7747" b="#ec7345">
    <circle cx="62" cy="22" r="6.800" fill="#fff" /><path d="M62 19l3 3-4 3M66 18l-3 4" fill="none" stroke="#ee7546" strokeWidth="1.200" />
    <path d="M52 25l6.500 5L44 51.500l-6-4.500z" fill="#fff" /><path d="M51 26L35 40l-6 7 7 .5z" fill="#fff" />
    <path d="M36 49l6 3-17 15-4-3.500z" fill="#fff" /><path d="M20 64l4 4.500-8-.5z" fill="#fff" />
    <path d="M55 27L38 47M57 29L41 49" stroke="#ee7546" strokeWidth=".9" />
  </Tile>
);
const Preview = () => (
  <Tile id="pv" a="#f6f6f6" b="#ececec">
    <defs>
      <linearGradient id="pvs" x1="0" y1="0" x2="0" y2="1"><stop offset="0" stopColor="#8db1ea" /><stop offset="1" stopColor="#bccdee" /></linearGradient>
      <clipPath id="pvp"><rect x="7" y="7" width="70" height="70" rx="13" /></clipPath>
      <linearGradient id="pvj"><stop offset="0" stopColor="#55585b" /><stop offset=".12" stopColor="#d5d8da" /><stop offset=".3" stopColor="#f2f4f5" /><stop offset=".75" stopColor="#cfd3d6" /><stop offset=".9" stopColor="#6f7376" /><stop offset="1" stopColor="#55585b" /></linearGradient>
    </defs>
    <g clipPath="url(#pvp)">
      <path fill="url(#pvs)" d="M0 0h84v46H0z" /><path fill="#263a72" d="M0 45h84v14H0z" /><path d="M0 56l10-3 8 4 12-3 12 3 10-2 32 4v25H0z" fill="#dfe6ee" />
      <path d="M0 56l6-2 10 4 6-1 3 4-12 3H0zM16 74l8-5 10 3 6 8H14zM40 54l8-1 6 3-8 2z" fill="#4a4444" /><path d="M0 66l14 2 10-2 16 3v4l-20-2-20 1z" fill="#a9bdd2" />
    </g>
    <path d="M44 57h36l7 24q1 6-6 6H42q-7 0-5-6z" fill="url(#pvj)" opacity=".95" /><path d="M41 79q20 6 42 0l2 6-3 2H42l-3-2z" fill="#8b8f92" /><path d="M44 78q18-8 37 0-18 6-37 0z" fill="#fafafa" /><path d="M55 63l9-2 3 6-8 1zM51 71l8-2 4 6-11 2zM64 70l6 1-2 5z" fill="#6d7782" />
    <rect x="43" y="41" width="38" height="18" rx="5" fill="#17181a" /><ellipse cx="62" cy="43.500" rx="18" ry="3.600" fill="#3a3b3e" />
  </Tile>
);
const PyCharm = () => (
  <Tile id="pc" a="#53bff2" b="#53bff2">
    <g clipPath="url(#pcc)"><path d="M54 0h30v50L70 30z" fill="#5fd68d" /><path d="M66 25l18 20v39H46L30 66z" fill="#f0ea48" /><path d="M66 20l18 26V20z" fill="#5fd68d" /><path d="M0 54l50 30H10L0 78z" fill="#74dc78" /><path d="M20 66l26 18H30z" fill="#b6e35e" /></g>
    <rect x="15" y="15" width="54" height="54" fill="#000" />
    <text x="21" y="43" fill="#fff" className="font-['Liberation_Sans'] text-[29px] font-bold" textLength="38" lengthAdjust="spacingAndGlyphs">PC</text>
    <rect x="22.500" y="57.500" width="22" height="4" fill="#fff" />
  </Tile>
);
const Folder = () => (
  <svg className="h-[86px] w-[88px] overflow-visible drop-shadow-[0_1px_2px_rgba(0,0,0,.35)]" viewBox="0 0 88 86">
    <defs><linearGradient id="fo" x1="0" y1="0" x2="0" y2="1"><stop offset="0" stopColor="#74c2f3" /><stop offset=".12" stopColor="#80cdfb" /><stop offset="1" stopColor="#6cbef3" /></linearGradient></defs>
    <path d="M9 22V5q0-4 4-4h25l4 6h32q4 0 4 4v14z" fill="#4fa6dc" />
    <path d="M16 2h34l18 22H16z" fill="#f1f1f1" /><path d="M39 1h10v24H39z" fill="#77797c" /><path d="M44 1v24" stroke="#2c2c2e" strokeWidth="4" strokeDasharray="2 2" /><path d="M50 1l18 22v-2L52 1z" fill="#c9c9c9" />
    <path d="M0 34V17q0-5 5-5h19q3 0 5 2l5 5q2 1.500 4 1.500h44q5 0 5 5V34z" fill="#4b9fd6" />
    <path d="M0 29q0-5 5-5h77q5 0 5 5v51q0 5-5 5H5q-5 0-5-5z" fill="url(#fo)" /><path d="M1 78h85" stroke="#5fb0e6" strokeWidth="1" />
  </svg>
);
const Trash = () => (
  <svg className="h-[92px] w-[74px] overflow-visible" viewBox="0 0 74 92">
    <defs><linearGradient id="tr"><stop offset="0" stopColor="#6b7074" /><stop offset=".4" stopColor="#585c61" /><stop offset=".75" stopColor="#666b70" /><stop offset="1" stopColor="#54595d" /></linearGradient></defs>
    <path d="M0 9l10 72q1.500 10 13 10h28q11.500 0 13-10L74 9z" fill="url(#tr)" /><path d="M11 82q2 9 12 9h28q10 0 12-9-3-4-10-4H22q-8 0-11 4z" fill="#85898c" opacity=".5" />
    <ellipse cx="37" cy="9" rx="36.500" ry="8.500" fill="#55705a" stroke="#76837b" strokeWidth="1" />
  </svg>
);

function DockCell({ children, dot }: { children: ReactNode; dot?: boolean }) {
  return (
    <div className="flex h-full w-[112px] shrink-0 flex-col items-center pt-[18px]">
      <div className="relative flex h-[84px] items-center">{children}</div>
      {dot && <i className="mt-[18px] h-[8px] w-[8px] rounded-full bg-[#b4e8a8]" />}
    </div>
  );
}

function Dock() {
  return (
    <div className="ml-[216px] mt-[2px] flex h-[134px] w-[2128px] rounded-[38px] border-2 border-white/20 bg-[linear-gradient(90deg,#26421f_0%,#2a5022_25%,#2f6026_50%,#38762d_78%,#3d8030_100%)] pl-[4px] shadow-[0_0_0_1px_rgba(0,0,0,.35)]">
      <DockCell dot><Finder /></DockCell><DockCell><Launchpad /></DockCell><DockCell><Safari /></DockCell><DockCell><Messages /></DockCell>
      <DockCell><Mail /></DockCell><DockCell><Photos /></DockCell><DockCell><Calendar /></DockCell><DockCell><Contacts /></DockCell>
      <DockCell><Music /></DockCell><DockCell><AppStore /></DockCell>
      <DockCell><Settings /><span className={`absolute -right-[14px] -top-[10px] flex h-[40px] w-[40px] items-center justify-center rounded-full bg-[#e0503f] text-[22px] text-white ${sys}`}>1</span></DockCell>
      <DockCell dot><Chrome /></DockCell><DockCell><Phone /></DockCell>
      <i className="ml-[24px] mr-[24px] mt-[16px] h-[98px] w-[2px] shrink-0 bg-[#7bab6f]" />
      <DockCell><Postman /></DockCell><DockCell><Preview /></DockCell><DockCell dot><PyCharm /></DockCell>
      <i className="ml-[26px] mr-[22px] mt-[16px] h-[98px] w-[2px] shrink-0 bg-[#7bab6f]" />
      <DockCell><Folder /></DockCell><DockCell><Trash /></DockCell>
    </div>
  );
}

export default function App() {
  return (
    <div className="relative flex h-[1600px] w-[2560px] flex-col overflow-hidden bg-[linear-gradient(90deg,#33397a_0%,#384189_25%,#3d4c9b_50%,#3e58a9_75%,#3f5bad_100%),linear-gradient(90deg,#23411d_0%,#2d5625_4%,#335f2a_20%,#437f37_45%,#579a49_75%,#6fbf5e_94%,#6ebd5d_100%)] bg-[length:100%_90px,100%_100%] bg-no-repeat">
      <MenuBar />
      <div className="mt-[4px] flex h-[1404px] w-full shrink-0 flex-col overflow-hidden rounded-[22px] border-2 border-[#55575a] bg-[#202020] shadow-[0_0_0_1px_#000,0_24px_50px_rgba(0,0,0,.65)]">
        <TabStrip />
        <div className="h-[162px] shrink-0 rounded-t-[14px] bg-[#3c3c3c]">
          <Toolbar />
          <Bookmarks />
        </div>
        <div className="h-[4px] shrink-0 bg-[linear-gradient(90deg,#ea5c57,#fbfb90)]" />
        <Page />
      </div>
      <Dock />
    </div>
  );
}
